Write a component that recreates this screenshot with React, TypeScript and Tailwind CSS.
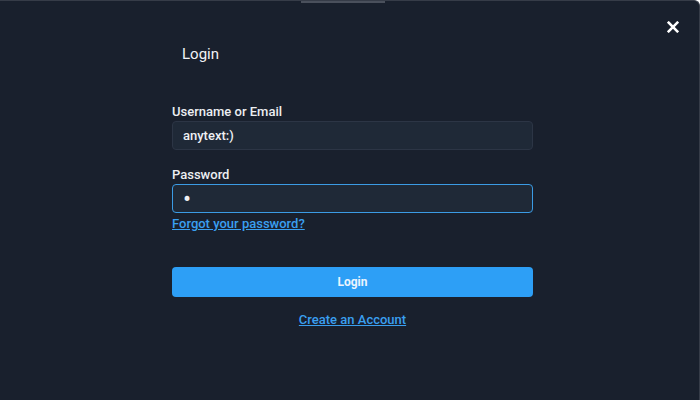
import React, { useState } from 'react';

const App: React.FC = () => {
    const [username, setUsername] = useState('anytext:)');
    const [password, setPassword] = useState('a');

    return (
        <div
            className="relative w-[700px] h-[400px] bg-[#19202d] border-t border-r border-[#363c48] rounded-tr-md overflow-hidden text-[#e6e9ee]"
            style={{ fontFamily: 'Roboto, "Noto Sans", sans-serif' }}
        >
            {/* little grey handle on the top edge */}
            <div className="absolute top-0 left-[301px] w-[84px] h-[2px] bg-[#4a505c]" />

            <button className="absolute top-[19px] right-[19px] w-[14px] h-[14px] flex items-center justify-center">
                <svg viewBox="0 0 14 14" className="w-[12px] h-[12px]">
                    <path d="M2 2 L12 12 M12 2 L2 12" stroke="#ffffff" strokeWidth="3" strokeLinecap="square" />
                </svg>
            </button>

            <div className="flex flex-col w-[361px] ml-[172px] pt-[43px]">
                <h1 className="pl-[10px] text-[15px] leading-[20px] font-normal text-[#f1f3f6]">Login</h1>

                <label className="mt-[39px] text-[13px] leading-[18px] font-medium text-[#eceef2]">
                    Username or Email
                </label>
                <input
                    value={username}
                    onChange={e => setUsername(e.target.value)}
                    className="h-[29px] px-[10px] rounded-[4px] bg-[#1f2937] border border-[#2c3545] text-[13px] font-medium text-[#eef0f3] outline-none"
                />

                <label className="mt-[16px] text-[13px] leading-[18px] font-medium text-[#eceef2]">
                    Password
                </label>
                <input
                    type="password"
                    value={password}
                    onChange={e => setPassword(e.target.value)}
                    className="h-[29px] px-[10px] rounded-[4px] bg-[#1f2937] border border-[#3b9be4] text-[24px] text-[#eef0f3] outline-none"
                />
                <a href="#" className="mt-[2px] self-start text-[13px] leading-[18px] font-medium text-[#3a9ff0] underline">
                    Forgot your password?
                </a>

                <button className="mt-[34px] h-[30px] rounded-[4px] bg-[#2d9ff6] text-[12px] font-bold text-[#eaf4fe]">
                    Login
                </button>

                <a href="#" className="mt-[14px] self-center text-[13px] leading-[18px] font-medium text-[#3a9ff0] underline">
                    Create an Account
                </a>
            </div>
        </div>
    );
};

export default App;
